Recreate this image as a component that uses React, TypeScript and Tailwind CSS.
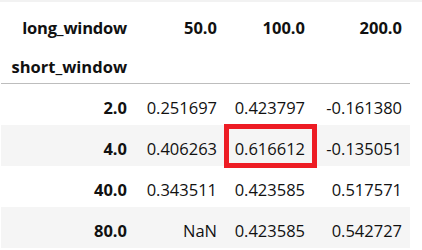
import React from "react";

const rows: { idx: string; vals: string[] }[] = [
  { idx: "2.0", vals: ["0.251697", "0.423797", "-0.161380"] },
  { idx: "4.0", vals: ["0.406263", "0.616612", "-0.135051"] },
  { idx: "40.0", vals: ["0.343511", "0.423585", "0.517571"] },
  { idx: "80.0", vals: ["NaN", "0.423585", "0.542727"] },
];

const cols = "grid grid-cols-[134px_90px_88px_97px]";

export default function App() {
  return (
    <div
      className="w-[422px] h-[250px] bg-white text-[16.5px] text-[#111] overflow-hidden"
      style={{ fontFamily: '"Open Sans", "Noto Sans", sans-serif' }}
    >
      <div className="h-[2px] bg-[#f2f2f2]" />
      <div className="ml-px w-[409px] relative">
        <div className={`${cols} h-[44px] pt-[8px] items-center font-bold`}>
          <div className="text-right pr-2 tracking-[-0.2px]">long_window</div>
          <div className="text-right pr-2">50.0</div>
          <div className="text-right pr-2">100.0</div>
          <div className="text-right pr-2">200.0</div>
        </div>
        <div className={`${cols} h-[38px] pt-[6px] items-center font-bold border-b border-[#bdbdbd]`}>
          <div className="text-right pr-2">short_window</div>
          <div />
          <div />
          <div />
        </div>
        {rows.map((r, i) => (
          <div
            key={r.idx}
            className={`${cols} h-[41px] pt-[7px] items-center ${i % 2 === 1 ? "bg-[#f5f5f5]" : "bg-white"}`}
          >
            <div className="text-right pr-2 font-bold">{r.idx}</div>
            {r.vals.map((v, j) => (
              <div key={j} className="text-right pr-2">
                {v}
              </div>
            ))}
          </div>
        ))}
        <div className="absolute left-[223px] top-[122px] w-[93px] h-[44px] border-[5px] border-[#ed1c24]" />
      </div>
    </div>
  );
}
